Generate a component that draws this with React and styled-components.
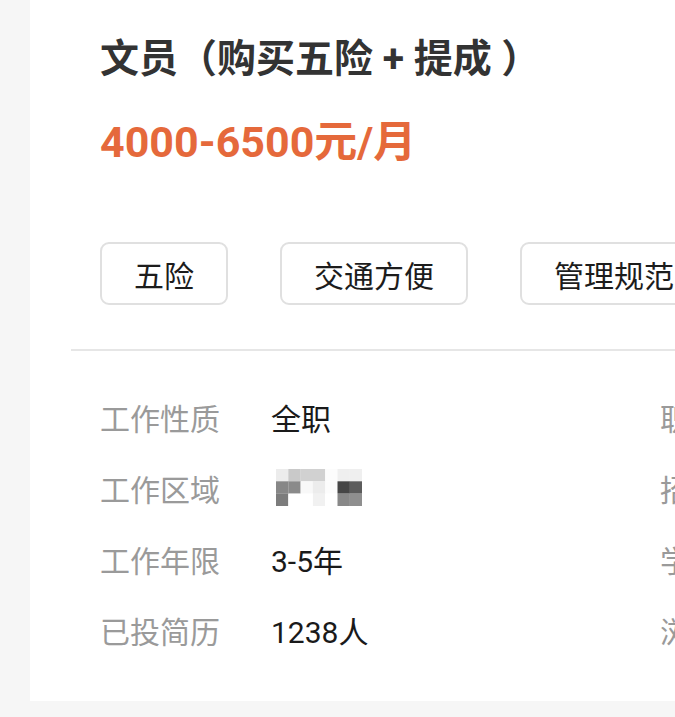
import styled, { createGlobalStyle } from 'styled-components';

const GlobalStyle = createGlobalStyle`
  html, body {
    margin: 0;
    padding: 0;
    background: #f6f6f6;
    overflow: hidden;
  }
  body {
    font-family: Roboto, "Noto Sans CJK SC", sans-serif;
  }
`;

const Page = styled.div`
  width: 675px;
  height: 717px;
  overflow: hidden;
  padding-left: 30px;
  box-sizing: border-box;
`;

const Card = styled.div`
  width: 1300px;
  background: #fff;
  padding: 33px 0 36px 0;
`;

const Head = styled.div`
  padding-left: 70px;
`;

const Title = styled.h1`
  margin: 0;
  font-size: 39px;
  line-height: 52px;
  font-weight: 700;
  color: #333;
  white-space: nowrap;
`;

const Salary = styled.div`
  margin-top: 29px;
  font-size: 43px;
  line-height: 56px;
  font-weight: 700;
  color: #e5693b;
`;

const Tags = styled.div`
  display: flex;
  gap: 52px;
  margin-top: 72px;
`;

const Tag = styled.span`
  display: inline-flex;
  align-items: center;
  height: 63px;
  box-sizing: border-box;
  padding: 0 32px;
  border: 2px solid #e0e0e0;
  border-radius: 9px;
  font-size: 30px;
  color: #1c1c1c;
  white-space: nowrap;
`;

const Divider = styled.div`
  height: 2px;
  background: #e6e6e6;
  margin: 44px 0 0 41px;
`;

const InfoGrid = styled.div`
  display: grid;
  grid-template-columns: 560px 560px;
  padding: 30px 0 0 70px;
`;

const InfoItem = styled.div`
  display: flex;
  align-items: center;
  height: 71px;
  font-size: 30px;
  white-space: nowrap;
`;

const Label = styled.span`
  width: 171px;
  color: #9a9a9a;
`;

const Value = styled.span`
  color: #1a1a1a;
`;

const mosaic = [
  ['#ececec', '#c9c9c9', '#d1d1d1', '#d1d1d1', '#fcfcfc', '#efefef', '#efefef'],
  ['#878787', '#8a8a8a', '#f8f8f8', '#ececec', '#fcfcfc', '#464646', '#5c5c5c'],
  ['#7c7c7c', '#ffffff', '#ffffff', '#f1f1f1', '#ffffff', '#888888', '#8f8f8f'],
];

const Mosaic = () => (
  <svg width="86" height="37" viewBox="0 0 86 37" style={{ marginLeft: 5 }}>
    {mosaic.map((row, r) =>
      row.map((c, i) => (
        <rect key={`${r}-${i}`} x={i * 12.3} y={r * 12.3} width="12.4" height="12.4" fill={c} />
      ))
    )}
  </svg>
);

const info = [
  ['工作性质', '全职', '职位类别', '文员'],
  ['工作区域', null, '招聘人数', '5人'],
  ['工作年限', '3-5年', '学历要求', '大专'],
  ['已投简历', '1238人', '浏览次数', '5620次'],
];

const App = () => {
  const tags = ['五险', '交通方便', '管理规范', '周末双休'];
  return (
    <Page>
      <GlobalStyle />
      <Card>
        <Head>
          <Title>文员（购买五险 + 提成 ）</Title>
          <Salary>4000-6500元/月</Salary>
          <Tags>
            {tags.map((t) => (
              <Tag key={t}>{t}</Tag>
            ))}
          </Tags>
        </Head>
        <Divider />
        <InfoGrid>
          {info.map(([l1, v1, l2, v2]) => [
            <InfoItem key={l1}>
              <Label>{l1}</Label>
              {v1 ? <Value>{v1}</Value> : <Mosaic />}
            </InfoItem>,
            <InfoItem key={l2}>
              <Label>{l2}</Label>
              <Value>{v2}</Value>
            </InfoItem>,
          ])}
        </InfoGrid>
      </Card>
    </Page>
  );
};

export default App;
